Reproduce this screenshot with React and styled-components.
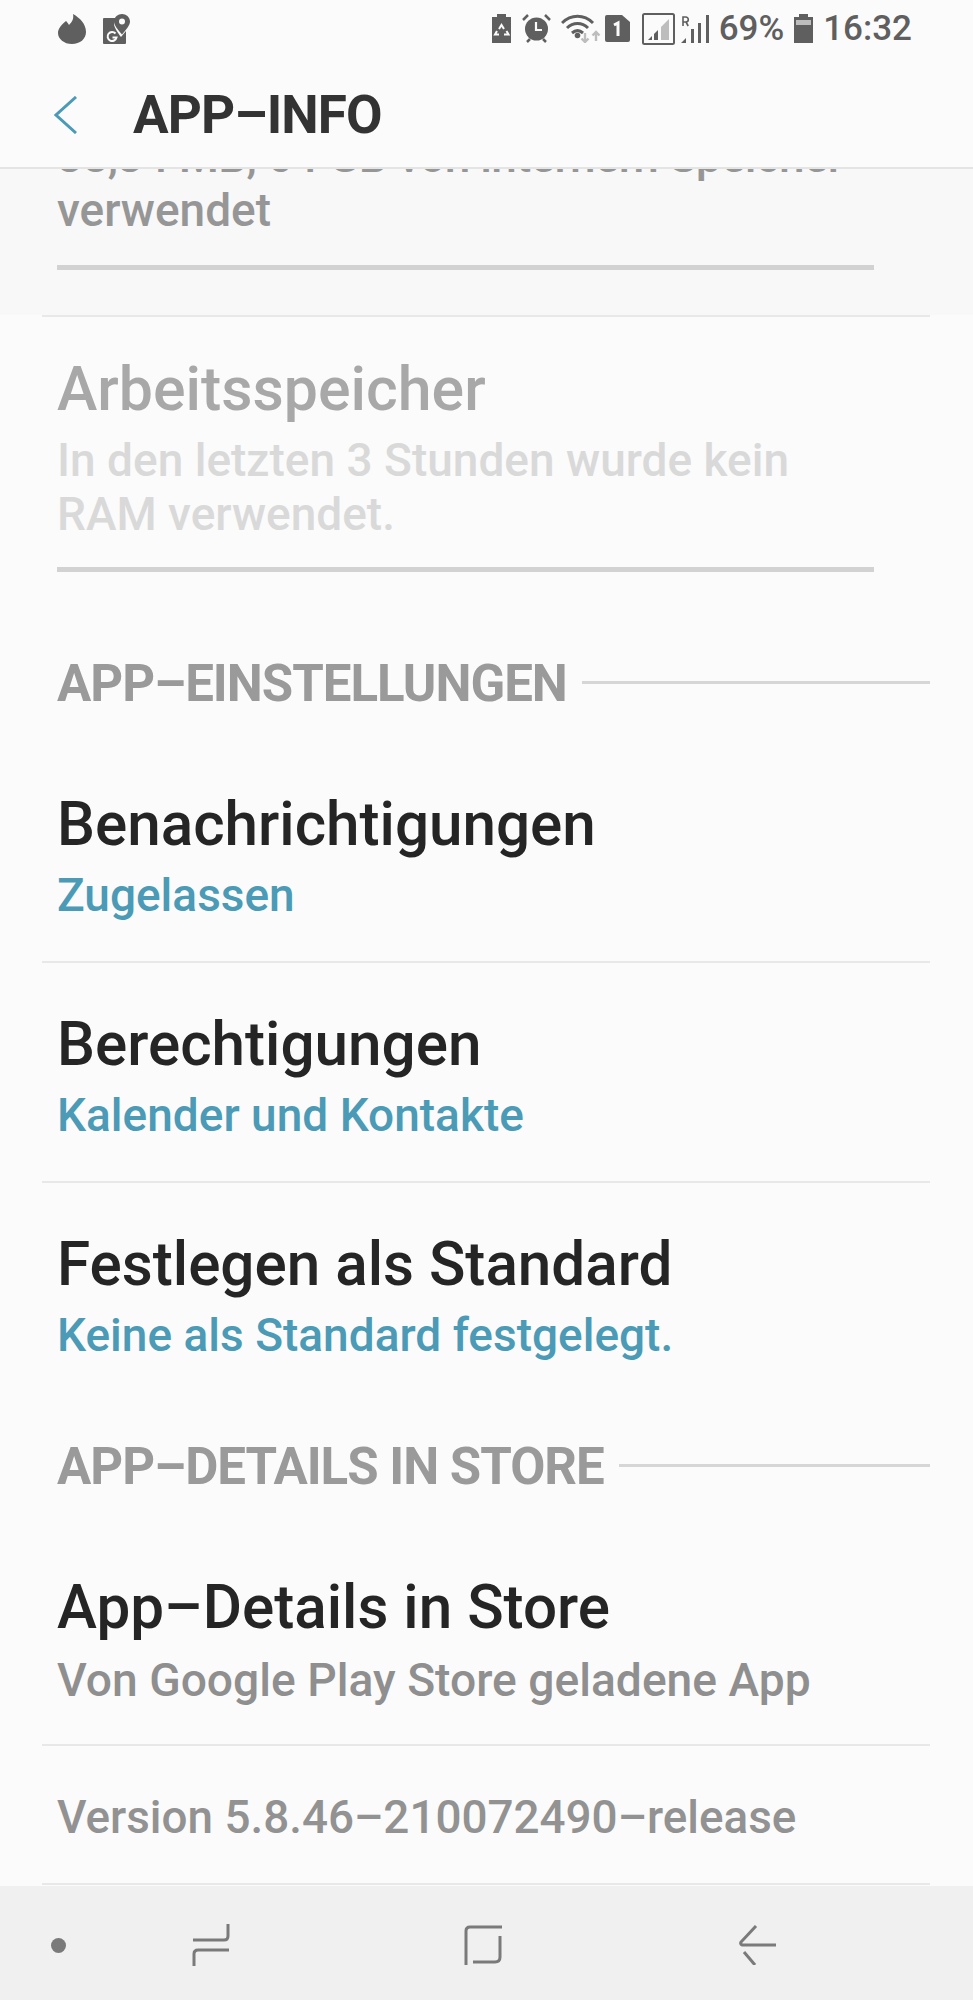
import React from 'react'
import styled, { createGlobalStyle } from 'styled-components'

const GlobalStyle = createGlobalStyle`
  html, body { margin: 0; padding: 0; background: #fbfbfb; }
  * { box-sizing: border-box; }
`

const Screen = styled.div`
  width: 973px;
  height: 2000px;
  display: flex;
  flex-direction: column;
  overflow: hidden;
  background: #fbfbfb;
  font-family: Roboto, "Liberation Sans", sans-serif;
`

const StatusBar = styled.div`
  height: 60px;
  flex: none;
  display: flex;
  align-items: center;
  padding: 0 61px 3px 58px;
  color: #606060;
  svg { display: block; flex: none; }
`

const StatusLeft = styled.div`
  display: flex;
  align-items: center;
  gap: 17px;
`

const StatusRight = styled.div`
  margin-left: auto;
  display: flex;
  align-items: center;
`

const Slot = styled.span`
  display: block;
  margin-left: ${p => p.$gap || 0}px;
`

const StatusText = styled.span`
  display: block;
  margin-left: ${p => p.$gap}px;
  font-size: 35px;
  font-weight: 500;
  line-height: 40px;
  color: #5f5f5f;
`

const Header = styled.header`
  position: relative;
  z-index: 1;
  height: 109px;
  flex: none;
  display: flex;
  align-items: center;
  padding: 2px 0 0 54px;
  background: #fbfbfb;
  border-bottom: 2px solid #e4e4e4;
`

const Title = styled.h1`
  margin: 0 0 0 55px;
  font-size: 53px;
  font-weight: 700;
  letter-spacing: -0.9px;
  line-height: 60px;
  color: #333;
`

const Scroller = styled.div`
  flex: 1;
  min-height: 0;
  overflow: hidden;
`

const StorageBlock = styled.div`
  margin-top: -40px;
  padding: 0 0 0 57px;
  height: 186px;
  background: #f8f8f8;
`

const StorageText = styled.p`
  margin: 0;
  font-size: 46px;
  font-weight: 500;
  line-height: 54px;
  letter-spacing: ${p => (p.$tight ? '-0.76px' : 'normal')};
  color: #969696;
  white-space: nowrap;
`

const Bar = styled.div`
  width: 817px;
  height: 5px;
  background: #d2d2d2;
  margin-top: ${p => p.$top}px;
`

const Divider = styled.div`
  height: 2px;
  margin: 0 43px 0 42px;
  background: #e8e8e8;
`

const RamBlock = styled.div`
  padding: 0 0 0 57px;
`

const RamTitle = styled.div`
  padding-top: 40px;
  font-size: 60.8px;
  font-weight: 500;
  line-height: 66px;
  color: #a8a8a8;
`

const RamText = styled.p`
  margin: 10px 0 0;
  font-size: 46px;
  font-weight: 500;
  line-height: 54px;
  color: #d9d9d9;
`

const SectionHead = styled.div`
  display: flex;
  align-items: center;
  gap: 15px;
  padding: 3px 43px 0 57px;
  height: 60px;
  margin: ${p => p.$top}px 0 31px;
  font-size: 51px;
  font-weight: 700;
  letter-spacing: -1px;
  color: #9a9a9a;
  white-space: nowrap;
  &::after {
    content: "";
    flex: 1;
    height: 3px;
    margin-top: -3px;
    background: #d6d6d6;
  }
`

const Row = styled.div`
  padding: 49px 0 0 57px;
  height: ${p => p.$height || 218}px;
`

const RowTitle = styled.div`
  font-size: 60.2px;
  font-weight: 500;
  line-height: 66px;
  color: #252525;
  white-space: nowrap;
`

const RowSub = styled.div`
  margin-top: ${p => (p.$muted ? 12 : 10)}px;
  font-size: ${p => (p.$muted ? 46.2 : 46)}px;
  font-weight: 500;
  line-height: 54px;
  color: ${p => (p.$muted ? '#8f8f8f' : '#4b9ab6')};
  white-space: nowrap;
`

const VersionRow = styled.div`
  height: 137px;
  padding: 6px 0 0 57px;
  display: flex;
  align-items: center;
  font-size: 45.8px;
  font-weight: 500;
  color: #929292;
`

const NavBar = styled.nav`
  height: 114px;
  flex: none;
  padding-top: 4px;
  background: #f0f0f0;
  display: grid;
  grid-template-columns: 116px 190px 354px 194px;
  align-items: center;
  justify-items: center;
  svg { display: block; }
`

const NavDot = styled.span`
  width: 15px;
  height: 15px;
  border-radius: 50%;
  background: #7a7a7a;
`

const Flame = () => (
  <svg width="28" height="30" viewBox="0 0 28 30" fill="#5f5f5f">
    <path d="M15 0c1 5-1 8-4 11C10 9 9 8 8 7 3 11 0 15 0 19c0 6 6 11 14 11s14-5 14-12C28 10 22 4 15 0z" />
  </svg>
)

const MapsIcon = () => (
  <svg width="27" height="30" viewBox="0 0 27 30">
    <path fill="#5f5f5f" d="M1 4h13c-2 2-3 4-3 6 0 3 4 9 7 13l5-6v12a1 1 0 0 1-1 1H1a1 1 0 0 1-1-1V5a1 1 0 0 1 1-1z" />
    <path fill="#5f5f5f" fillRule="evenodd" d="M19 0c4 0 8 3 8 7.500 0 3.500-4 8.500-8 13-4-4.500-8-9.500-8-13C11 3 15 0 19 0zm0 4.500a3 3 0 1 0 0 6 3 3 0 0 0 0-6z" />
    <path fill="none" stroke="#fbfbfb" strokeWidth="2" d="M12.500 19.500a4.500 4.500 0 1 0 1 4h-4" />
  </svg>
)

const RecycleBattery = () => (
  <svg width="19" height="29" viewBox="0 0 19 29">
    <path fill="#5f5f5f" d="M5 0h9v3h5v26H0V3h5z" />
    <path fill="none" stroke="#fbfbfb" strokeWidth="2" d="M7 15l2.500-4 2.500 4M14.500 17l2 3.500H12M7 20.500H3l2-3.500" />
  </svg>
)

const Alarm = () => (
  <svg width="29" height="29" viewBox="0 0 29 29">
    <path stroke="#5f5f5f" strokeWidth="2.500" d="M1 6l5-5M28 6l-5-5M5 28l3-3M24 28l-3-3" />
    <circle cx="14.500" cy="15" r="11.500" fill="#5f5f5f" />
    <path fill="none" stroke="#fbfbfb" strokeWidth="2.200" d="M14 8v8h6" />
  </svg>
)

const Wifi = () => (
  <svg width="40" height="29" viewBox="0 0 40 29">
    <path fill="none" stroke="#5f5f5f" strokeWidth="3" d="M1 9c9-9 22-9 31 0M6 14c6-6 15-6 21 0M11 19c3.500-3 7.500-3 11 0" />
    <circle cx="16.500" cy="21.500" r="2.800" fill="#5f5f5f" />
    <path fill="none" stroke="#bdbdbd" strokeWidth="2.400" d="M24 19v9M20.500 24.500l3.500 3.500 3.500-3.500" />
    <path fill="none" stroke="#bdbdbd" strokeWidth="2.400" d="M35 27v-9M31.500 21.500l3.500-3.500 3.500 3.500" />
  </svg>
)

const SimOne = () => (
  <svg width="25" height="27" viewBox="0 0 25 27">
    <path fill="#5f5f5f" d="M2 0h15l8 7v18a2 2 0 0 1-2 2H2a2 2 0 0 1-2-2V2a2 2 0 0 1 2-2z" />
    <path fill="none" stroke="#fbfbfb" strokeWidth="3" d="M9 10l4-2v13" />
  </svg>
)

const SignalBox = () => (
  <svg width="33" height="32" viewBox="0 0 33 32">
    <rect x="1" y="1" width="31" height="30" rx="1.500" fill="none" stroke="#5f5f5f" strokeWidth="2" />
    <path fill="#bdbdbd" d="M19 14l8-8v21h-8z" />
    <path fill="#5f5f5f" d="M6 27l4-4v4zM12 27v-6l4-4v10z" />
  </svg>
)

const SignalRoaming = () => (
  <svg width="28" height="28" viewBox="0 0 28 28">
    <path fill="#5f5f5f" d="M0 28l5-5v5zM10 28V14h3v14zM17 28V8h3v20zM25 28V0h3v28z" />
    <path fill="none" stroke="#5f5f5f" strokeWidth="1.600" d="M2 11V2h2.800a2.300 2.300 0 0 1 0 5H2M5 7l2.200 4" />
  </svg>
)

const Battery = () => (
  <svg width="19" height="29" viewBox="0 0 19 29">
    <path fill="#5f5f5f" d="M5 0h9v3h5v26H0V3h5z" />
    <rect x="2" y="6" width="15" height="5" fill="#bdbdbd" />
  </svg>
)

const BackChevron = () => (
  <svg width="24" height="38" viewBox="0 0 24 38">
    <path fill="none" stroke="#4b9ab6" strokeWidth="3" d="M22 1L2 19l20 18" />
  </svg>
)

const NavRecents = () => (
  <svg width="38" height="42" viewBox="0 0 38 42" fill="none" stroke="#7a7a7a">
    <path strokeWidth="3" d="M36 0v12q0 4-4 4H1" />
    <path strokeWidth="3" d="M2 42V30q0-4 4-4h31" />
  </svg>
)

const NavHome = () => (
  <svg width="38" height="40" viewBox="0 0 38 40" fill="none" stroke="#7a7a7a">
    <path strokeWidth="3" d="M2 40V6q0-4 4-4h32" />
    <path strokeWidth="3" d="M36 11v21q0 5-5 5H9" />
  </svg>
)

const NavBack = () => (
  <svg width="38" height="40" viewBox="0 0 38 40" fill="none" stroke="#7a7a7a">
    <path strokeWidth="3" d="M18 1L3 17q-1 2 1 3h34" />
    <path strokeWidth="3" d="M6 27l11 13" />
  </svg>
)

export default function App() {
  return (
    <Screen>
      <GlobalStyle />
      <StatusBar>
        <StatusLeft>
          <Flame />
          <MapsIcon />
        </StatusLeft>
        <StatusRight>
          <Slot><RecycleBattery /></Slot>
          <Slot $gap={11}><Alarm /></Slot>
          <Slot $gap={10}><Wifi /></Slot>
          <Slot $gap={4}><SimOne /></Slot>
          <Slot $gap={12}><SignalBox /></Slot>
          <Slot $gap={6}><SignalRoaming /></Slot>
          <StatusText $gap={10}>69%</StatusText>
          <Slot $gap={10}><Battery /></Slot>
          <StatusText $gap={10}>16:32</StatusText>
        </StatusRight>
      </StatusBar>
      <Header>
        <BackChevron />
        <Title>APP–INFO</Title>
      </Header>
      <Scroller>
        <StorageBlock>
          <StorageText $tight>38,34 MB, 64 GB von internem Speicher</StorageText>
          <StorageText>verwendet</StorageText>
          <Bar $top={28} />
        </StorageBlock>
        <Divider />
        <RamBlock>
          <RamTitle>Arbeitsspeicher</RamTitle>
          <RamText>In den letzten 3 Stunden wurde kein<br />RAM verwendet.</RamText>
          <Bar $top={26} />
        </RamBlock>
        <SectionHead $top={80}>APP–EINSTELLUNGEN</SectionHead>
        <Row>
          <RowTitle>Benachrichtigungen</RowTitle>
          <RowSub>Zugelassen</RowSub>
        </Row>
        <Divider />
        <Row>
          <RowTitle>Berechtigungen</RowTitle>
          <RowSub>Kalender und Kontakte</RowSub>
        </Row>
        <Divider />
        <Row $height={179}>
          <RowTitle>Festlegen als Standard</RowTitle>
          <RowSub>Keine als Standard festgelegt.</RowSub>
        </Row>
        <SectionHead $top={73}>APP–DETAILS IN STORE</SectionHead>
        <Row>
          <RowTitle>App–Details in Store</RowTitle>
          <RowSub $muted>Von Google Play Store geladene App</RowSub>
        </Row>
        <Divider />
        <VersionRow>Version 5.8.46–210072490–release</VersionRow>
        <Divider />
      </Scroller>
      <NavBar>
        <NavDot />
        <NavRecents />
        <NavHome />
        <NavBack />
      </NavBar>
    </Screen>
  )
}
